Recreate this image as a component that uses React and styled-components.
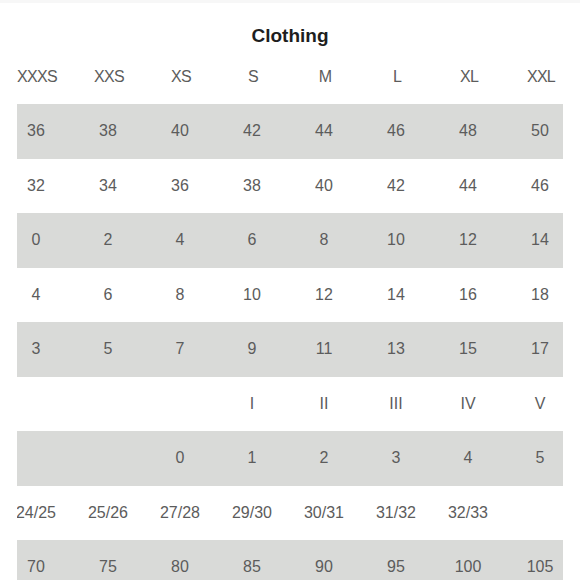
import React from "react";
import styled, { createGlobalStyle } from "styled-components";

const rows = [
  ["XXXS", "XXS", "XS", "S", "M", "L", "XL", "XXL"],
  ["36", "38", "40", "42", "44", "46", "48", "50"],
  ["32", "34", "36", "38", "40", "42", "44", "46"],
  ["0", "2", "4", "6", "8", "10", "12", "14"],
  ["4", "6", "8", "10", "12", "14", "16", "18"],
  ["3", "5", "7", "9", "11", "13", "15", "17"],
  ["", "", "", "I", "II", "III", "IV", "V"],
  ["", "", "0", "1", "2", "3", "4", "5"],
  ["24/25", "25/26", "27/28", "29/30", "30/31", "31/32", "32/33", ""],
  ["70", "75", "80", "85", "90", "95", "100", "105"],
];

const App = () => {
  return (
    <>
      <GlobalStyle />
      <Page>
        <Title>Clothing</Title>
        <Table>
          {rows.map((row, i) => (
            <Row key={i} $shaded={i % 2 === 1}>
              <Cells>
                {row.map((value, j) => (
                  <Cell key={j} $head={i === 0}>
                    {value}
                  </Cell>
                ))}
              </Cells>
            </Row>
          ))}
        </Table>
      </Page>
    </>
  );
};

const GlobalStyle = createGlobalStyle`
  body {
    margin: 0;
    background: #ffffff;
    font-family: "Liberation Sans", Arial, sans-serif;
  }
`;

const Page = styled.div`
  width: 580px;
  height: 580px;
  overflow: hidden;
  border-top: 3px solid #f7f7f7;
  box-sizing: border-box;
`;

const Title = styled.h1`
  margin: 0;
  padding-top: 19px;
  height: 46.5px;
  box-sizing: border-box;
  line-height: 28px;
  font-size: 19px;
  font-weight: 700;
  color: #1e1e1e;
  text-align: center;
`;

const Table = styled.div`
  margin: 0 17px;
  overflow: hidden;
`;

const Row = styled.div`
  height: 54.5px;
  background: ${(props) => (props.$shaded ? "#d9dad8" : "transparent")};
`;

const Cells = styled.div`
  display: grid;
  grid-template-columns: repeat(8, 72px);
  margin-left: -17px;
  height: 100%;
  align-items: center;
`;

const Cell = styled.div`
  text-align: center;
  font-size: 16px;
  letter-spacing: ${(props) => (props.$head ? "-0.7px" : "0")};
  color: #5c5c5c;
  white-space: nowrap;
  padding-left: ${(props) => (props.$head ? "2px" : "0")};
`;

export default App;
